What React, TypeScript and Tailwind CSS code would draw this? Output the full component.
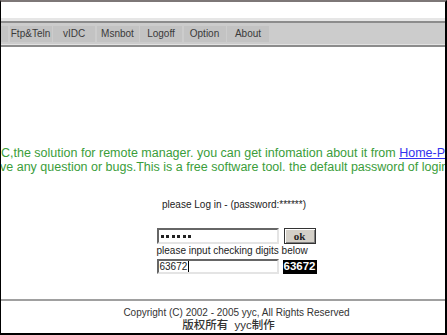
import React from "react";

const menu = ["Ftp&Teln", "vIDC", "Msnbot", "Logoff", "Option", "About"];

export default function App() {
  return (
    <div className="w-[447px] h-[335px] overflow-hidden bg-white font-['Liberation_Sans',Arial,sans-serif]">
      <div className="w-[447px] h-[335px] flex flex-col border-t-2 border-t-[#7d7777] border-l border-l-black border-r-2 border-r-black border-b-2 border-b-black overflow-hidden">
        <div className="h-[16px] shrink-0 bg-white" />
        <div className="h-[3px] shrink-0 bg-[#e6e6e6]" />
        <div className="h-[2px] shrink-0 bg-[#8c8c8c]" />
        <div className="h-[21px] shrink-0 bg-[#cccccc] flex items-center gap-[1.5px]">
          <div className="w-[7px] h-[16px] bg-[#c3c3c3]" />
          {menu.map((m) => (
            <div
              key={m}
              className="w-[42px] h-[16px] bg-[#c3c3c3] flex items-center justify-center text-[10px] leading-none text-[#3a3a3a]"
            >
              {m}
            </div>
          ))}
        </div>
        <div className="h-[1px] shrink-0 bg-[#e2e2e2]" />
        <div className="h-[2px] shrink-0 bg-[#8c8c8c]" />

        <div className="mt-[99px] text-[12.5px] leading-[14px] whitespace-nowrap text-[#3a9d3a]">
          <div>
            C,the solution for remote manager. you can get infomation about it from{" "}
            <a className="text-[#3333ee] underline">Home-Page</a>
          </div>
          <div className="-ml-[1px]">
            ve any question or bugs.This is a free software tool. the default password of login is 123456
          </div>
        </div>

        <div className="flex flex-col items-center pl-[27px]">
          <div className="mt-[25px] mr-[5px] text-[10px] leading-[12px] text-[#222] whitespace-nowrap">
            please Log in - (password:******)
          </div>
          <div className="w-[160px] flex flex-col">
            <div className="mt-[17px] flex items-center gap-[5px]">
              <div className="w-[122px] h-[16px] bg-white border-2 border-t-[#666] border-l-[#666] border-b-[#e4e4e4] border-r-[#e4e4e4] flex items-center gap-[2.5px] pl-[2px]">
                <span className="w-[3px] h-[3px] bg-[#222]" />
                <span className="w-[3px] h-[3px] bg-[#222]" />
                <span className="w-[3px] h-[3px] bg-[#222]" />
                <span className="w-[3px] h-[3px] bg-[#222]" />
                <span className="w-[3px] h-[3px] bg-[#222]" />
                <span className="w-[3px] h-[3px] bg-[#222]" />
              </div>
              <div className="w-[32px] h-[16px] bg-[#d4d0c8] border border-[#333] shadow-[inset_1px_1px_#ffffff,inset_-1px_-1px_#808080] flex items-center justify-center font-['Liberation_Serif',serif] font-bold text-[11px] leading-none text-[#222]">
                ok
              </div>
            </div>
            <div className="mt-[1px] text-[10px] leading-[12px] text-[#222] whitespace-nowrap">
              please input checking digits below
            </div>
            <div className="mt-[2px] flex items-center gap-[4px]">
              <div className="w-[122px] h-[15px] bg-white border-2 border-t-[#666] border-l-[#666] border-b-[#e4e4e4] border-r-[#e4e4e4] flex items-center pl-[1px] text-[10px] leading-none text-[#222]">
                63672
                <span className="w-[1px] h-[11px] bg-black ml-[1px]" />
              </div>
              <div className="w-[34px] h-[14px] bg-black text-white font-bold text-[11.5px] leading-none flex items-center justify-center">
                63672
              </div>
            </div>
          </div>
        </div>

        <div className="mt-[25px] h-[2px] shrink-0 bg-[#a0a0a0]" />

        <div className="flex flex-col items-center pl-[27px]">
          <div className="mt-[6px] text-[10px] leading-[12px] text-[#333] whitespace-nowrap">
            Copyright (C) 2002 - 2005 yyc, All Rights Reserved
          </div>
          <div className="mr-[16px] text-[11.5px] leading-[13px] text-[#333] whitespace-pre font-medium font-['Liberation_Sans','Noto_Sans_CJK_SC',sans-serif]">
            {"版权所有  yyc制作"}
          </div>
        </div>
      </div>
    </div>
  );
}
